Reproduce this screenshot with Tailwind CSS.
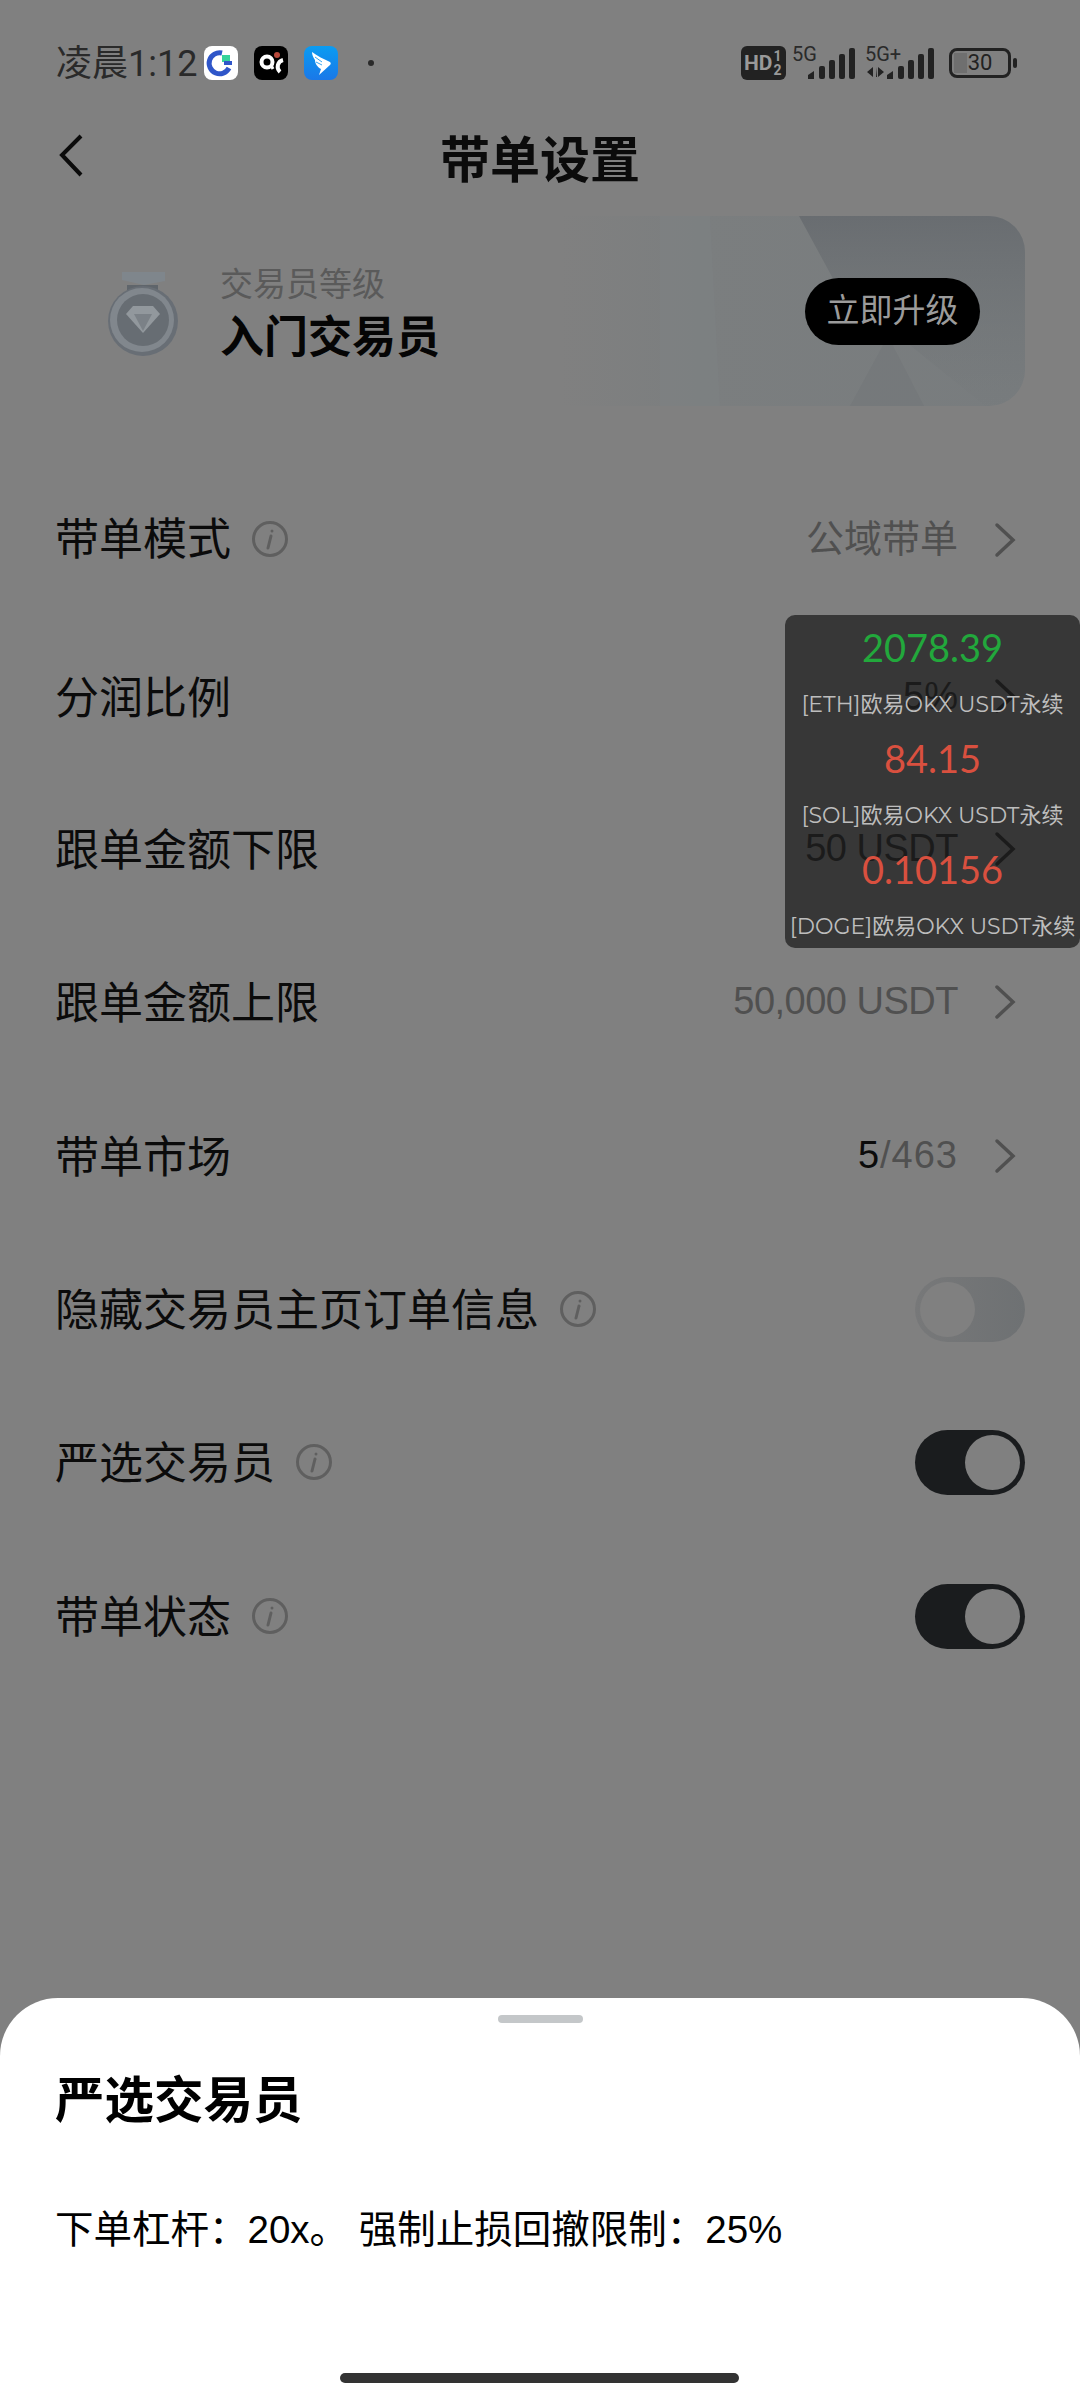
<!DOCTYPE html>
<html lang="zh-CN">

<head>
    <meta charset="UTF-8">
    <meta name="viewport" content="width=device-width, initial-scale=1.0">
    <title>带单设置</title>
    <script src="https://cdn.jsdelivr.net/npm/@tailwindcss/browser@4"></script>
</head>

<body class="m-0">
    <div class="relative w-[1080px] h-[2400px] overflow-hidden bg-[#808080] font-['Liberation_Sans','Noto_Sans_CJK_SC',sans-serif] text-[#0b0b0b]">

        <!-- Status bar -->
        <div class="h-[126px] pl-[56px] pr-[63px] pt-[46px] flex items-start font-['Roboto','Noto_Sans_CJK_SC',sans-serif]">
            <div class="flex items-center h-[34px]">
                <span class="w-[148px] pt-[2px] text-[36px] leading-[34px] text-[#2a2a2a] whitespace-nowrap">凌晨1:12</span>
                <svg class="w-[34px] h-[34px] mr-[16px]" viewBox="0 0 34 34">
                    <rect width="34" height="34" rx="8" fill="#fff" />
                    <path d="M25 22a10.500 10.500 0 1 1-7-15" fill="none" stroke="#2f56c9" stroke-width="5" />
                    <path d="M18 9h8v7h-8z" fill="#35d39b" />
                    <path d="M20 17h8" stroke="#2f56c9" stroke-width="4" />
                </svg>
                <svg class="w-[34px] h-[34px] mr-[16px]" viewBox="0 0 34 34">
                    <rect width="34" height="34" rx="8" fill="#000" />
                    <circle cx="13" cy="16" r="5.500" fill="none" stroke="#fff" stroke-width="4" />
                    <path d="M17 19l2 4" stroke="#fff" stroke-width="3" />
                    <path d="M29 14a7 7 0 0 0-3 12" fill="none" stroke="#fff" stroke-width="4" />
                    <circle cx="23" cy="9" r="3" fill="#b8483a" />
                </svg>
                <svg class="w-[34px] h-[34px]" viewBox="0 0 34 34">
                    <defs>
                        <linearGradient id="wing" x1="0" y1="0" x2="0" y2="1">
                            <stop offset="0" stop-color="#0a9cf2" />
                            <stop offset="1" stop-color="#1a78e8" />
                        </linearGradient>
                    </defs>
                    <rect width="34" height="34" rx="8" fill="url(#wing)" />
                    <path d="M8 6c5 4 12 7 18 10 1 1 1 2 0 3l-11 10 2-6c-4-2-6-6-6-9 0 0-3-4-3-8z" fill="#fff" />
                    <path d="M11 11l7 5M12 16l6 3" stroke="#35a5f0" stroke-width="1" />
                </svg>
                <span class="ml-[30px] w-[6px] h-[6px] rounded-full bg-[#2a2a2a]"></span>
            </div>
            <div class="ml-auto flex items-start">
                <div class="w-[45px] h-[34px] rounded-[6px] bg-[#222] flex items-center pl-[3px] text-[#999]">
                    <span class="text-[21px] font-bold leading-none">HD</span>
                    <span class="flex flex-col text-[14px] font-bold leading-[14px] ml-[1px]"><span>1</span><span>2</span></span>
                </div>
                <div class="relative w-[64px] h-[34px] ml-[6px]">
                    <span class="absolute left-0 top-[-2px] text-[20px] leading-[20px] text-[#2a2a2a]">5G</span>
                    <svg class="absolute left-[15px] top-[2px] w-[49px] h-[32px]" viewBox="0 0 49 32" fill="#222">
                        <path d="M1 31v-4l6-4v8z" />
                        <rect x="12" y="18" width="6" height="13" rx="2" />
                        <rect x="22" y="12" width="6" height="19" rx="2" />
                        <rect x="32" y="6" width="6" height="25" rx="2" />
                        <rect x="42" y="0" width="6" height="31" rx="2" />
                    </svg>
                </div>
                <div class="relative w-[70px] h-[34px] ml-[9px]">
                    <span class="absolute left-0 top-[-2px] text-[20px] leading-[20px] text-[#2a2a2a] whitespace-nowrap">5G+</span>
                    <svg class="absolute left-0 top-[2px] w-[70px] h-[32px]" viewBox="0 0 70 32" fill="#222">
                        <path d="M8 19v10l-6-5zM11 19v10h1zM13 29V19l6 5z" />
                        <path d="M22 31v-4l6-4v8z" />
                        <rect x="33" y="18" width="6" height="13" rx="2" />
                        <rect x="43" y="12" width="6" height="19" rx="2" />
                        <rect x="53" y="6" width="6" height="25" rx="2" />
                        <rect x="63" y="0" width="6" height="31" rx="2" />
                    </svg>
                </div>
                <div class="ml-[14px] mt-[2px] flex items-center">
                    <div class="relative w-[62px] h-[30px] rounded-[8px] border-[3px] border-[#222] overflow-hidden flex items-center justify-center">
                        <span class="absolute left-[2px] top-[2px] bottom-[2px] w-[13px] bg-[#6f6f6f]"></span>
                        <span class="relative text-[22px] leading-none text-[#222]">30</span>
                    </div>
                    <span class="ml-[2px] w-[4px] h-[10px] rounded-full bg-[#222]"></span>
                </div>
            </div>
        </div>

        <!-- Header -->
        <div class="relative h-[70px] flex items-center justify-center">
            <svg class="absolute left-[56px] top-[7px] w-[30px] h-[46px]" viewBox="0 0 30 46" fill="none" stroke="#0b0b0b" stroke-width="4">
                <path d="M25 3L6 22l19 20" />
            </svg>
            <h1 class="text-[50px] font-bold leading-none">带单设置</h1>
        </div>

        <!-- Trader level card -->
        <div class="relative ml-[55px] mr-[55px] mt-[20px] h-[190px]">
            <div class="absolute inset-y-0 left-[505px] right-0 rounded-r-[36px] overflow-hidden bg-gradient-to-r from-[#808080] via-[#7b7e7f] via-30% to-[#787c7e]">
                <svg class="absolute inset-0 w-full h-full" viewBox="0 0 465 190" preserveAspectRatio="none">
                    <defs>
                        <linearGradient id="wedge" x1="0" y1="0" x2="0" y2="1">
                            <stop offset="0" stop-color="#686c70" stop-opacity=".95" />
                            <stop offset=".5" stop-color="#6c7073" stop-opacity=".45" />
                            <stop offset="1" stop-color="#74787a" stop-opacity=".15" />
                        </linearGradient>
                    </defs>
                    <path d="M239 0h226v190h-40L277 70z" fill="url(#wedge)" />
                    <path d="M100 0h50l10 190h-60z" fill="#7e8283" opacity=".5" />
                    <path d="M290 190l38-70 36 70z" fill="#6c7073" opacity=".3" />
                </svg>
            </div>
            <div class="relative h-full flex items-center pl-[52px] pr-[45px]">
                <svg class="w-[72px] h-[86px] shrink-0 mt-[6px]" viewBox="0 0 72 86">
                    <path d="M20 14h31v8H20z" fill="#5f656b" />
                    <path d="M15 1h43v9L37 14 15 9z" fill="#7f868c" />
                    <circle cx="36" cy="50" r="35" fill="#686e75" />
                    <circle cx="35" cy="49" r="32" fill="#81878d" />
                    <circle cx="36" cy="49" r="26" fill="#676d73" />
                    <path d="M19 43l7-8h20l7 8-17 19z" fill="#92989d" />
                    <path d="M27 43h18l-9 17z" fill="#7b8187" />
                </svg>
                <div class="ml-[41px] pt-[10px]">
                    <div class="text-[33px] leading-[44px] text-[#5a5a5a]">交易员等级</div>
                    <div class="text-[44px] leading-[62px] font-bold text-[#050505]">入门交易员</div>
                </div>
                <div class="ml-auto w-[175px] h-[67px] rounded-full bg-black text-[33px] text-[#9b9b9b] flex items-center justify-center">立即升级</div>
            </div>
        </div>

        <!-- Settings rows -->
        <div class="mt-[56px] px-[55px] text-[44px]">
            <div class="h-[154px] flex items-center">
                <span class="pt-[2px]">带单模式</span>
                <svg class="w-[38px] h-[38px] ml-[20px]" viewBox="0 0 38 38" fill="none" stroke="#5f5f5f">
                    <circle cx="19" cy="19" r="16.500" stroke-width="3" />
                    <path d="M20 16l-3 12" stroke-width="3" stroke-linecap="round" />
                    <circle cx="21" cy="11" r="1.500" fill="#5f5f5f" stroke="none" />
                </svg>
                <span class="ml-auto text-[38px] text-[#505050]">公域带单</span>
                <svg class="w-[24px] h-[36px] ml-[35px] mr-[8px] mt-[2px]" viewBox="0 0 24 36" fill="none" stroke="#505050" stroke-width="3.500" stroke-linecap="round">
                    <path d="M4 3l16 15L4 33" />
                </svg>
            </div>
            <div class="h-[152px] mt-[4px] flex items-center">
                <span class="pt-[5px]">分润比例</span>
                <span class="ml-auto text-[38px] text-[#111]">5%</span>
                <svg class="w-[24px] h-[36px] ml-[35px] mr-[8px]" viewBox="0 0 24 36" fill="none" stroke="#111" stroke-width="3.500" stroke-linecap="round">
                    <path d="M4 3l16 15L4 33" />
                </svg>
            </div>
            <div class="h-[153px] flex items-center">
                <span class="pt-[5px]">跟单金额下限</span>
                <span class="ml-auto text-[38px] tracking-[-0.5px] text-[#111]">50 USDT</span>
                <svg class="w-[24px] h-[36px] ml-[35px] mr-[8px]" viewBox="0 0 24 36" fill="none" stroke="#111" stroke-width="3.500" stroke-linecap="round">
                    <path d="M4 3l16 15L4 33" />
                </svg>
            </div>
            <div class="h-[153px] flex items-center">
                <span class="pt-[5px]">跟单金额上限</span>
                <span class="ml-auto text-[38px] tracking-[-0.5px] text-[#505050]">50,000 USDT</span>
                <svg class="w-[24px] h-[36px] ml-[35px] mr-[8px]" viewBox="0 0 24 36" fill="none" stroke="#505050" stroke-width="3.500" stroke-linecap="round">
                    <path d="M4 3l16 15L4 33" />
                </svg>
            </div>
            <div class="h-[155px] flex items-center">
                <span class="pt-[5px]">带单市场</span>
                <span class="ml-auto text-[38px] tracking-[1px] text-[#505050]"><span class="text-[#0b0b0b]">5</span>/463</span>
                <svg class="w-[24px] h-[36px] ml-[35px] mr-[8px]" viewBox="0 0 24 36" fill="none" stroke="#505050" stroke-width="3.500" stroke-linecap="round">
                    <path d="M4 3l16 15L4 33" />
                </svg>
            </div>
            <div class="h-[152px] flex items-center">
                <span class="pt-[4px]">隐藏交易员主页订单信息</span>
                <svg class="w-[38px] h-[38px] ml-[20px]" viewBox="0 0 38 38" fill="none" stroke="#5f5f5f">
                    <circle cx="19" cy="19" r="16.500" stroke-width="3" />
                    <path d="M20 16l-3 12" stroke-width="3" stroke-linecap="round" />
                    <circle cx="21" cy="11" r="1.500" fill="#5f5f5f" stroke="none" />
                </svg>
                <div class="ml-auto w-[110px] h-[65px] rounded-full bg-gradient-to-r from-[#777879] to-[#6e7173] flex items-center pl-[5px]">
                    <span class="w-[55px] h-[55px] rounded-full bg-[#808080]"></span>
                </div>
            </div>
            <div class="h-[154px] flex items-center">
                <span class="pt-[3px]">严选交易员</span>
                <svg class="w-[38px] h-[38px] ml-[20px]" viewBox="0 0 38 38" fill="none" stroke="#5f5f5f">
                    <circle cx="19" cy="19" r="16.500" stroke-width="3" />
                    <path d="M20 16l-3 12" stroke-width="3" stroke-linecap="round" />
                    <circle cx="21" cy="11" r="1.500" fill="#5f5f5f" stroke="none" />
                </svg>
                <div class="ml-auto w-[110px] h-[65px] rounded-full bg-[#1a1c1e] flex items-center justify-end pr-[5px]">
                    <span class="w-[55px] h-[55px] rounded-full bg-[#808080]"></span>
                </div>
            </div>
            <div class="h-[154px] flex items-center">
                <span class="pt-[3px]">带单状态</span>
                <svg class="w-[38px] h-[38px] ml-[20px]" viewBox="0 0 38 38" fill="none" stroke="#5f5f5f">
                    <circle cx="19" cy="19" r="16.500" stroke-width="3" />
                    <path d="M20 16l-3 12" stroke-width="3" stroke-linecap="round" />
                    <circle cx="21" cy="11" r="1.500" fill="#5f5f5f" stroke="none" />
                </svg>
                <div class="ml-auto w-[110px] h-[65px] rounded-full bg-[#1a1c1e] flex items-center justify-end pr-[5px]">
                    <span class="w-[55px] h-[55px] rounded-full bg-[#808080]"></span>
                </div>
            </div>
        </div>

        <!-- Floating price panel -->
        <div class="absolute left-[785px] top-[615px] w-[295px] h-[333px] rounded-[10px] bg-[#1f1f1f]/75 flex flex-col items-center pt-[10px] font-['Montserrat','Lato','Noto_Sans_CJK_SC',sans-serif] whitespace-nowrap">
            <div class="h-[44px] leading-[44px] text-[38px] font-['Lato'] text-[#22a83c]">2078.39</div>
            <div class="h-[67px] pt-[4px] leading-[64px] text-[22px] text-[#bdbdbd]">[ETH]欧易OKX USDT永续</div>
            <div class="h-[44px] leading-[44px] text-[38px] font-['Lato'] text-[#d9503f]">84.15</div>
            <div class="h-[67px] pt-[4px] leading-[64px] text-[22px] text-[#bdbdbd]">[SOL]欧易OKX USDT永续</div>
            <div class="h-[44px] leading-[44px] text-[38px] font-['Lato'] text-[#d9503f]">0.10156</div>
            <div class="h-[67px] pt-[4px] leading-[64px] text-[22px] text-[#bdbdbd]">[DOGE]欧易OKX USDT永续</div>
        </div>

        <!-- Bottom sheet -->
        <div class="absolute left-0 right-0 bottom-0 h-[402px] rounded-t-[58px] bg-white px-[55px]">
            <div class="mx-auto mt-[17px] w-[85px] h-[8px] rounded-full bg-[#c4c7c9]"></div>
            <h2 class="mt-[44px] text-[49.500px] leading-[68px] font-bold text-black">严选交易员</h2>
            <p class="mt-[70px] text-[38.500px] leading-[50px] text-black whitespace-nowrap">下单杠杆：20x。 强制止损回撤限制：25%</p>
            <div class="absolute left-[340px] bottom-[17px] w-[399px] h-[10px] rounded-full bg-[#333]"></div>
        </div>
    </div>
</body>

</html>
